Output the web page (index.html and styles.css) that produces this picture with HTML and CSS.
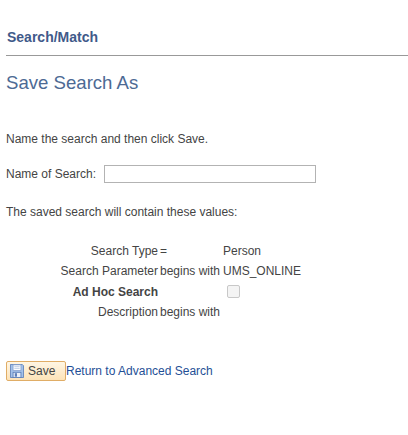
FILE: index.html
```html
<!DOCTYPE html>
<html lang="en">
<head>
    <meta charset="UTF-8">
    <title>Save Search As</title>
    <link rel="stylesheet" href="styles.css">
</head>
<body>
    <div class="page-header">
        <h2>Search/Match</h2>
    </div>
    <h1>Save Search As</h1>
    <p class="intro">Name the search and then click Save.</p>
    <div class="name-row">
        <label for="search-name">Name of Search:</label>
        <input id="search-name" type="text">
    </div>
    <p class="contains">The saved search will contain these values:</p>

    <div class="values">
        <div class="row">
            <span class="field">Search Type</span>
            <span class="op">=</span>
            <span class="val">Person</span>
        </div>
        <div class="row">
            <span class="field">Search Parameter</span>
            <span class="op">begins with</span>
            <span class="val">UMS_ONLINE</span>
        </div>
        <div class="row adhoc">
            <span class="field bold">Ad Hoc Search</span>
            <span class="op"></span>
            <span class="val"><span class="check"></span></span>
        </div>
        <div class="row">
            <span class="field">Description</span>
            <span class="op">begins with</span>
            <span class="val"></span>
        </div>
    </div>

    <div class="actions">
        <button class="save-btn" type="button">
            <svg class="save-icon" width="14" height="14" viewBox="0 0 16 16">
                <path d="M.5 .5h13.500l1.500 1.500v13.500h-15z" fill="#a3c1ea" stroke="#5c7fb8"/>
                <rect x="3.500" y="1" width="9" height="6.500" fill="#fbfcfe" stroke="#7f9cc9" stroke-width="0.8"/>
                <path d="M5 3h6M5 5h6" stroke="#a9bedd" stroke-width="0.8"/>
                <rect x="3.500" y="9.500" width="9" height="6" fill="#e9eff8" stroke="#5c7fb8"/>
                <rect x="5.500" y="10.500" width="2.500" height="4" fill="#5c7fb8"/>
            </svg>
            Save
        </button>
        <a class="return-link" href="#">Return to Advanced Search</a>
    </div>
</body>
</html>
```

FILE: styles.css
```css
body {
    margin: 0;
    font-family: "Liberation Sans", Arial, sans-serif;
    font-size: 12px;
    color: #444;
    background: #fff;
}
.page-header {
    margin-left: 6px;
    height: 55px;
    border-bottom: 1px solid #999;
}
.page-header h2 {
    margin: 0;
    padding: 29px 0 0 1px;
    font-size: 14px;
    line-height: 16px;
    color: #3f5a8a;
}
h1 {
    margin: 15px 0 0 6px;
    font-size: 18.6px;
    line-height: 23px;
    font-weight: normal;
    color: #4d6a94;
}
.intro {
    margin: 38px 0 0 6px;
    line-height: 14px;
}
.name-row {
    display: flex;
    align-items: center;
    gap: 8px;
    margin: 19px 0 0 6px;
}
.name-row input {
    width: 212px;
    height: 18px;
    box-sizing: border-box;
    margin: 0;
    padding: 0;
    border: 1px solid #b3b3b3;
    background: #fff;
}
.contains {
    margin: 22px 0 0 6px;
    line-height: 14px;
}
.values {
    margin-top: 22px;
}
.row {
    display: grid;
    grid-template-columns: 158px 63px 1fr;
    height: 20px;
    line-height: 20px;
}
.row.adhoc {
    height: 21px;
    align-items: center;
}
.op {
    padding-left: 2px;
}
.val {
    padding-left: 2px;
}
.field {
    text-align: right;
}
.bold {
    font-weight: bold;
}
.check {
    display: block;
    width: 13px;
    height: 13px;
    margin-left: 4px;
    box-sizing: border-box;
    border: 1px solid #c8c8c8;
    border-radius: 2px;
    background: #f4f4f4;
}
.actions {
    display: flex;
    align-items: center;
    margin: 39px 0 0 6px;
}
.save-btn {
    display: flex;
    align-items: center;
    gap: 4px;
    width: 60px;
    height: 20px;
    margin: 0;
    padding: 0 0 0 3px;
    border: 1px solid #e0ad66;
    border-radius: 2px;
    background: linear-gradient(#fff6e4, #fde3b8);
    font-family: inherit;
    font-size: 12px;
    color: #444;
}
.return-link {
    color: #1f4f96;
    text-decoration: none;
}
```
